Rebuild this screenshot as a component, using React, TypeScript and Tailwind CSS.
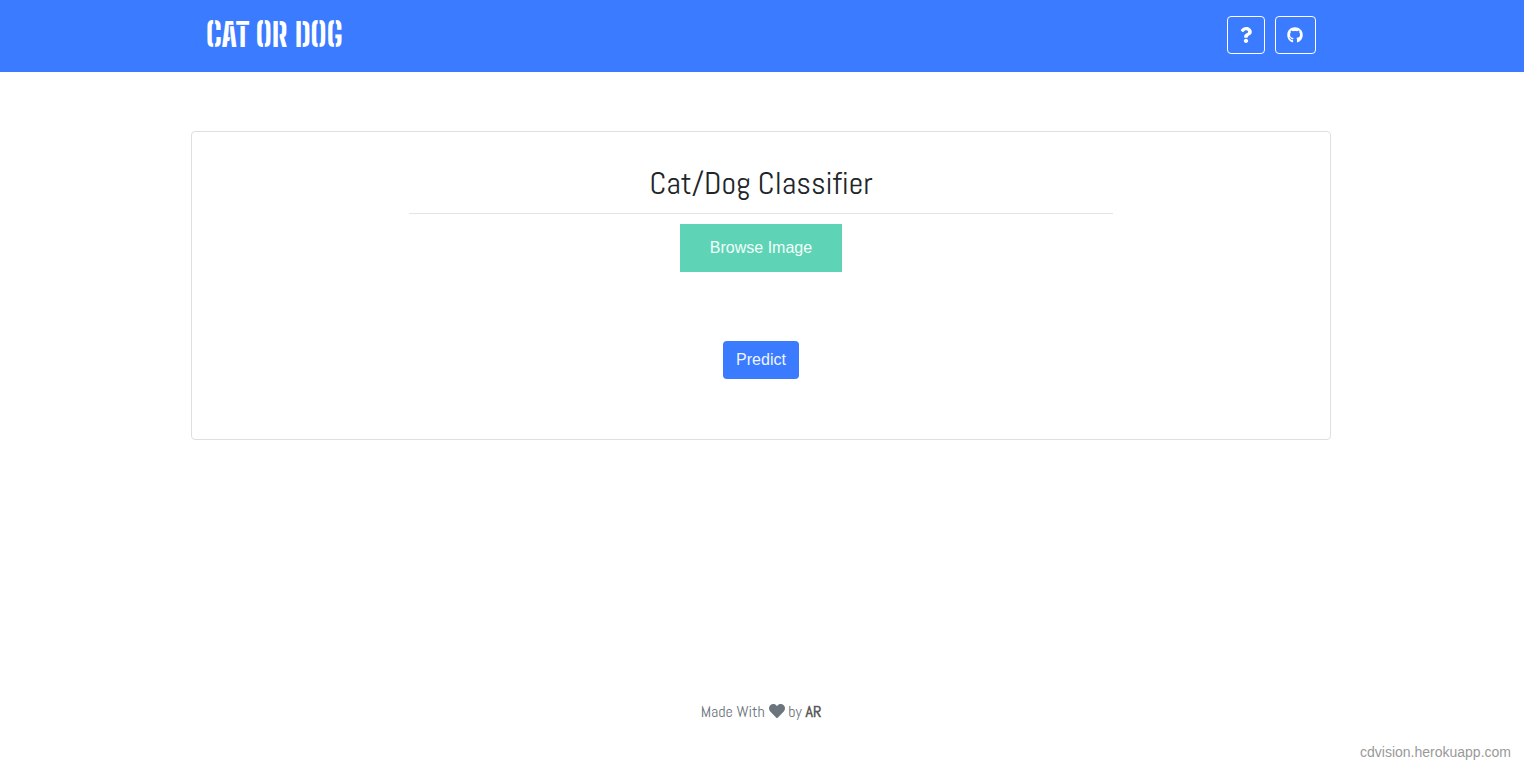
import { FaGithub, FaHeart, FaQuestion } from "react-icons/fa";

const condensed =
  "font-['Abel','Roboto_Condensed','Open_Sans_Condensed','Liberation_Sans_Narrow','Roboto',sans-serif]";
const stencil =
  "font-['Big_Shoulders_Stencil_Text','Big_Shoulders_Stencil_Display','Roboto_Condensed','Liberation_Sans_Narrow','Roboto',sans-serif]";

export default function App() {
  return (
    <div className="flex min-h-screen flex-col bg-white font-['Liberation_Sans',Arial,sans-serif] text-base text-[#212529]">
      <header className="bg-[#3a7bff] pr-0.5">
        <div className="mx-auto flex h-[72px] max-w-[1140px] items-center justify-between px-[15px] pb-0.5">
          <a href="#" className={`${stencil} text-[32px] leading-10 font-extrabold text-white`}>
            CAT OR DOG
          </a>
          <nav className="flex gap-2.5">
            <button
              type="button"
              aria-label="Help"
              className="flex h-[38px] w-[38px] items-center justify-center rounded border border-white text-white"
            >
              <FaQuestion className="size-4" />
            </button>
            <a
              href="#github"
              aria-label="GitHub"
              className="flex h-[38px] w-[41px] items-center rounded border border-white px-[11px] text-white"
            >
              <FaGithub className="size-4 shrink-0" />
            </a>
          </nav>
        </div>
      </header>

      <main className="pt-[59px] pr-0.5">
        <section className="mx-auto flex max-w-[1140px] flex-col items-center rounded border border-[#dfdfdf] px-5 pt-8 pb-[60px]">
          <h1
            className={`${condensed} w-[704px] max-w-full border-b border-[#e5e5e5] pb-2.5 text-center text-[32px] leading-[39px]`}
          >
            Cat/Dog Classifier
          </h1>
          <button
            type="button"
            className="mt-2.5 h-12 bg-[#5fd3b6] px-[30px] text-[#f0fffa]"
          >
            Browse Image
          </button>
          <button
            type="button"
            className="mt-[69px] h-[38px] rounded bg-[#3a7bff] px-[13px] text-[#f0f5ff]"
          >
            Predict
          </button>
        </section>
      </main>

      <footer className="mt-auto">
        <p
          className={`${condensed} pr-0.5 text-center text-base leading-6 text-[#6c757d]`}
        >
          Made With <FaHeart className="inline-block size-4 align-[-2px]" /> by{" "}
          <strong className="text-[#5c5c5c]">AR</strong>
        </p>
        <p className="px-[13px] pt-[18px] pb-0.5 text-right text-sm leading-5 text-[#999999]">
          cdvision.herokuapp.com
        </p>
      </footer>
    </div>
  );
}
